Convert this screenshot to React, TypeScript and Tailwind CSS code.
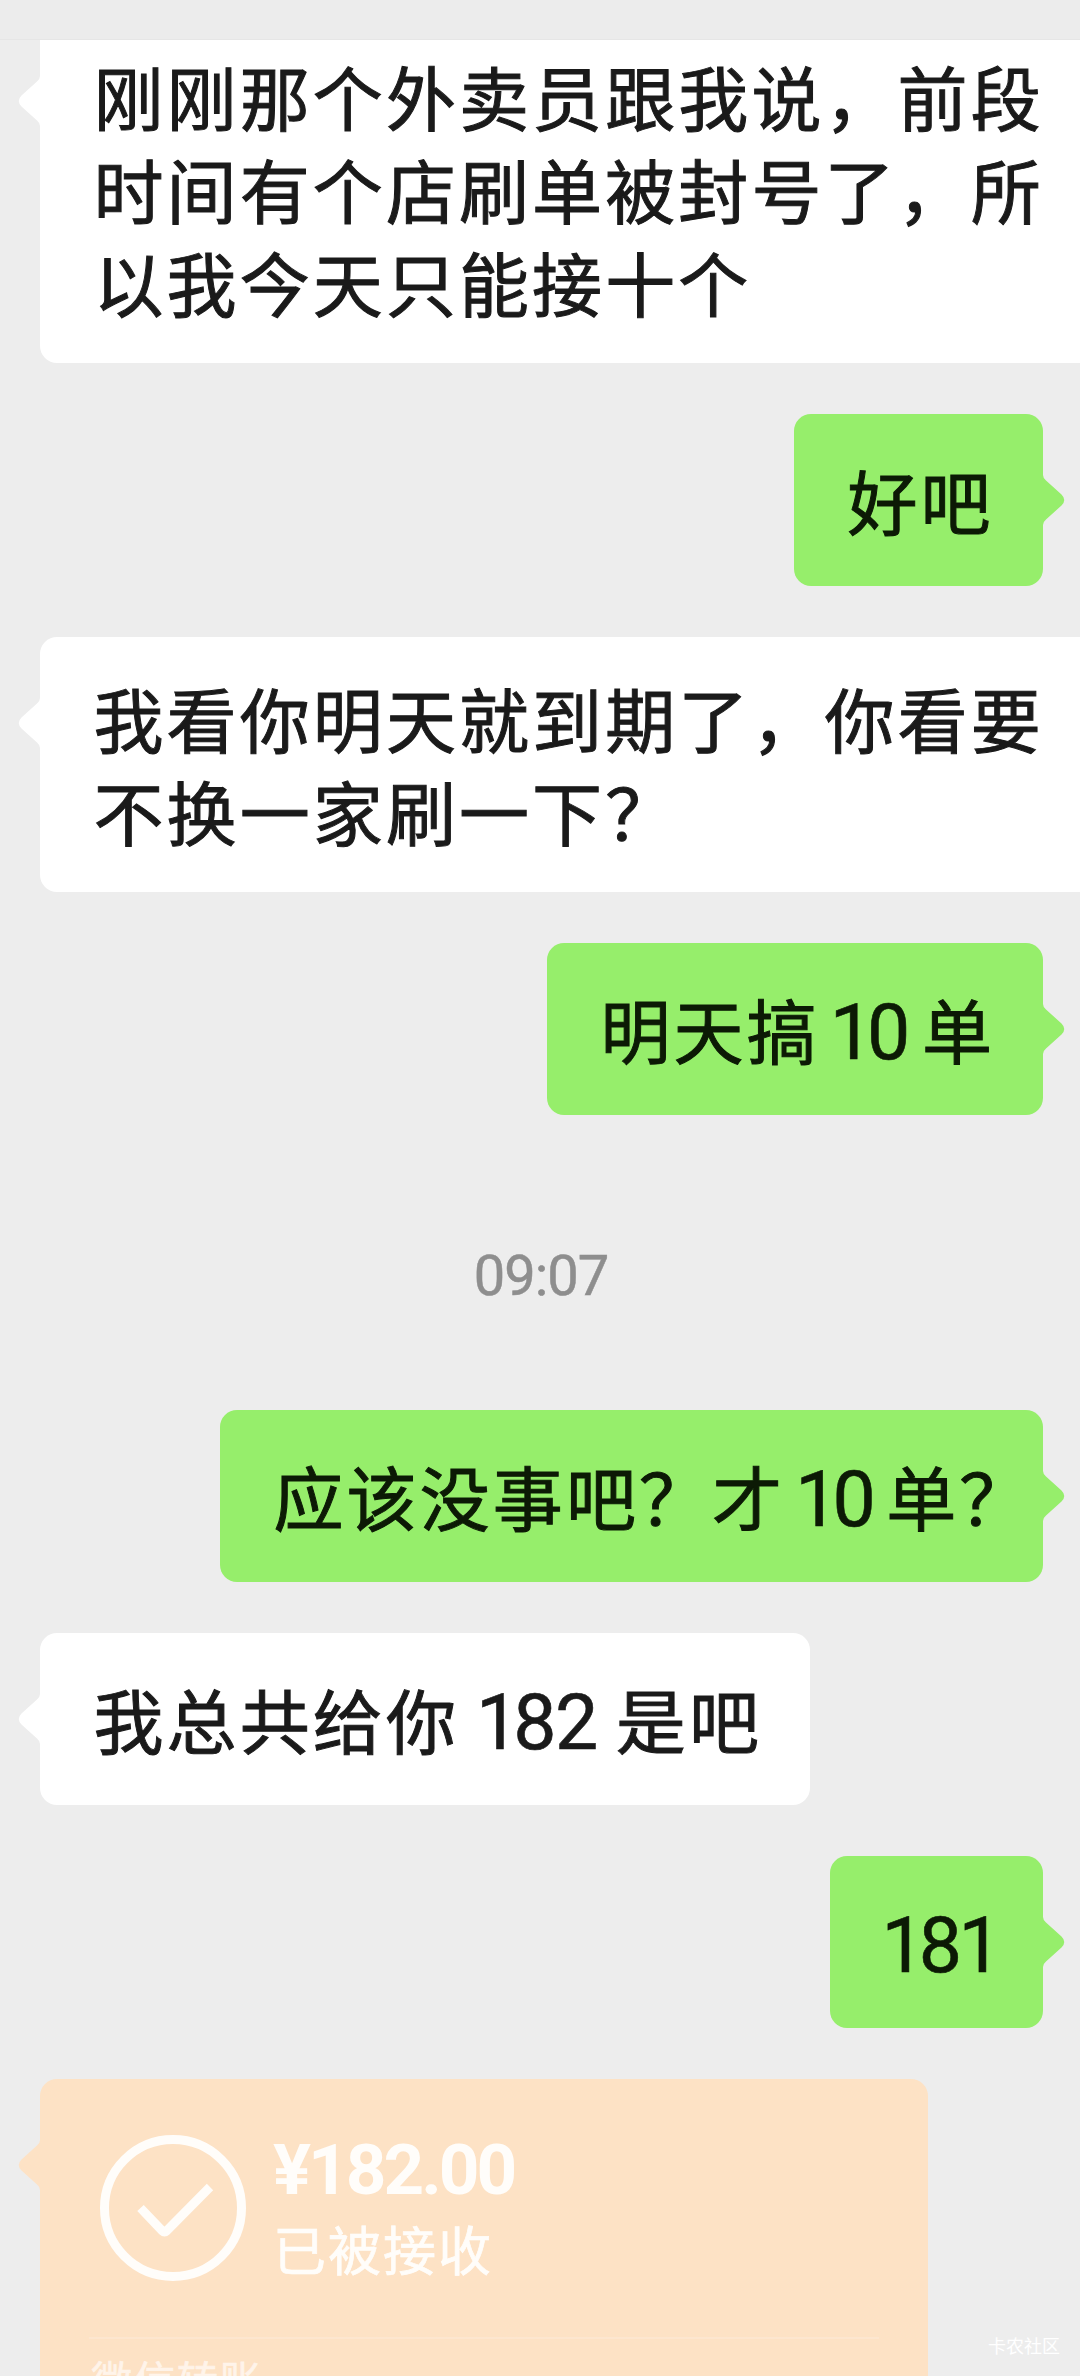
import { ReactNode } from "react";
import clsx from "clsx";

type MessageType = {
  side: "left" | "right";
  width: string;
  lines: ReactNode[];
};

// Digits are drawn with a latin face and a bit larger than the text around them
function Num({ value, className }: { value: string; className?: string }) {
  return (
    <span className={clsx("font-['Roboto'] text-[77px] leading-none tracking-[-1.5px] [-webkit-text-stroke:0.600px]", className)}>
      {value.split("").map((char, index) => (
        <span key={index} className={char === "1" ? "-ml-[2px] tracking-[-6px]" : ""}>
          {char}
        </span>
      ))}
    </span>
  );
}

const before: MessageType[] = [
  {
    side: "left",
    width: "w-[1120px]",
    lines: ["刚刚那个外卖员跟我说，前段", "时间有个店刷单被封号了，所", "以我今天只能接十个"],
  },
  { side: "right", width: "w-[249px]", lines: ["好吧"] },
  {
    side: "left",
    width: "w-[1120px]",
    lines: ["我看你明天就到期了，你看要", "不换一家刷一下？"],
  },
  {
    side: "right",
    width: "w-[496px]",
    lines: [
      <>
        明天搞
        <Num value="10" className="ml-[12px] mr-[13px]" />单
      </>,
    ],
  },
];

const after: MessageType[] = [
  {
    side: "right",
    width: "w-[823px]",
    lines: [
      <>
        应该没事吧？才
        <Num value="10" className="ml-[12px] mr-[12px]" />
        单？
      </>,
    ],
  },
  {
    side: "left",
    width: "w-[770px]",
    lines: [
      <>
        我总共给你
        <Num value="182" className="ml-[19px] mr-[19px]" />
        是吧
      </>,
    ],
  },
  { side: "right", width: "w-[213px]", lines: [<Num value="181" />] },
];

function Tail({ side, className }: { side: "left" | "right"; className: string }) {
  return (
    <svg
      viewBox="0 0 24 50"
      className={clsx(
        "absolute top-[61px] h-[50px] w-[24px]",
        side === "left" ? "-left-[22px] -scale-x-100" : "-right-[22px]",
        className
      )}
    >
      <path d="M0 0H2Q2 3 5 5.500L20.500 19.500Q26 25 20.500 30.500L5 44.500Q2 47 2 50H0Z" fill="currentColor" />
    </svg>
  );
}

function Message({ side, width, lines }: MessageType) {
  const isLeft = side === "left";
  return (
    <div className={clsx("flex", isLeft ? "justify-start pl-[40px]" : "justify-end pr-[37px]")}>
      <div
        className={clsx(
          "relative flex min-h-[172px] shrink-0 flex-col justify-center rounded-[17px] pb-[35.5px] pt-[33.5px] pl-[53.5px]",
          width,
          isLeft ? "bg-white text-[#1a1a1a]" : "bg-[#96ee6b] text-[#0c1a05]"
        )}
      >
        <Tail side={side} className={isLeft ? "text-white" : "text-[#96ee6b]"} />
        {lines.map((line, index) => (
          <p
            key={index}
            className="h-[93px] whitespace-nowrap text-[70px] leading-[93px] tracking-[3.1px] [-webkit-text-stroke:1px]"
          >
            {line}
          </p>
        ))}
      </div>
    </div>
  );
}

function Transfer() {
  return (
    <div className="pl-[40px]">
      <div className="relative h-[420px] w-[888px] rounded-[17px] bg-[#fde2c5] px-[49px] pt-[56px] text-[#fffdfa]">
        <Tail side="left" className="text-[#fde2c5]" />
        <div className="flex h-[202px] pl-[11px]">
          <svg viewBox="0 0 146 146" fill="none" stroke="currentColor" className="h-[146px] w-[146px]">
            <circle cx="73" cy="73" r="68.5" strokeWidth="9" />
            <path d="M40.500 73L62.500 96Q64.500 98 66.500 96L110 52" strokeWidth="9" />
          </svg>
          <div className="ml-[27px] flex flex-col whitespace-nowrap">
            <p className="mt-[-1px] h-[72px] font-['Roboto'] text-[71px] font-bold leading-[72px] tracking-[-3px]">
              ¥182.00
            </p>
            <p className="mt-[6px] h-[72px] text-[53px] leading-[72px] tracking-[2px] [-webkit-text-stroke:0.700px]">
              已被接收
            </p>
          </div>
        </div>
        <div className="border-t-2 border-[#fde6cf] pl-[2px] pt-[9px] text-[41px] leading-[60px] tracking-[2px] text-[#fff4ea] [-webkit-text-stroke:0.700px]">
          微信转账
        </div>
      </div>
    </div>
  );
}

export default function App() {
  return (
    <div className="relative h-[2376px] w-[1080px] overflow-hidden bg-[#ededed] font-['Noto_Sans_CJK_SC',sans-serif]">
      <header className="h-[39px] bg-[#ececec]" />
      <main className="h-[2337px] overflow-hidden border-t border-[#e6e6e6]">
        <div className="-mt-[25px] flex flex-col gap-[51px]">
          {before.map((message, index) => (
            <Message key={index} {...message} />
          ))}
        </div>
        <p className="flex h-[295px] items-center justify-center pl-[2px] pt-[27px] font-['Roboto'] text-[56px] tracking-[-1px] text-[#8e8e8e] [-webkit-text-stroke:0.500px]">
          09:07
        </p>
        <div className="flex flex-col gap-[51px]">
          {after.map((message, index) => (
            <Message key={index} {...message} />
          ))}
          <Transfer />
        </div>
      </main>
      <span className="absolute bottom-[18px] right-[20px] text-[18px] leading-[26px] text-white">卡农社区</span>
    </div>
  );
}
